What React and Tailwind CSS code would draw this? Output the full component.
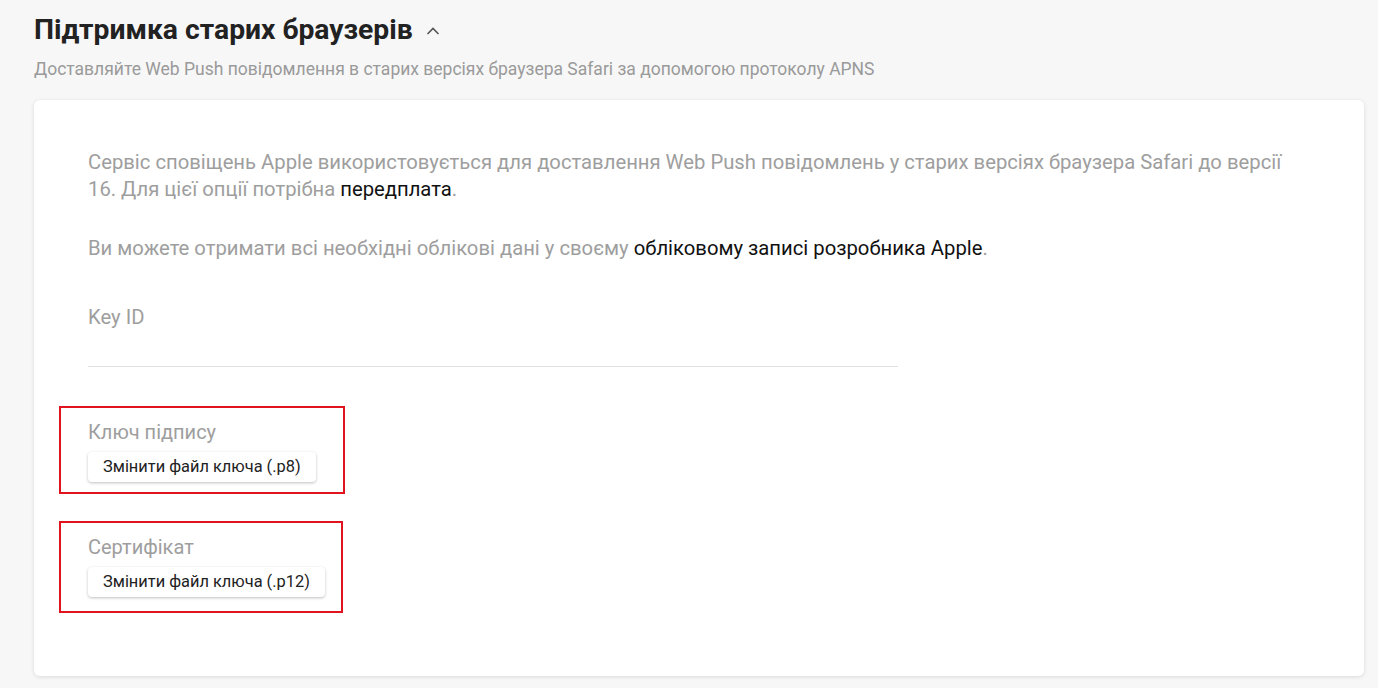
export default function App() {
    return (
        <div className="min-h-screen bg-[#f7f7f7] pl-[34px] pr-[14px] pt-[14px] pb-4" style={{ fontFamily: "Roboto, 'Noto Sans', sans-serif" }}>
            <div className="flex items-center gap-[13px]">
                <h1 className="text-[28.3px] leading-[32px] font-bold text-[#222]">Підтримка старих браузерів</h1>
                <svg width="14" height="10" viewBox="0 0 14 10" className="mt-[1px]">
                    <polyline points="1.5,8 7,2.5 12.5,8" fill="none" stroke="#555" strokeWidth="1.6" />
                </svg>
            </div>
            <p className="mt-[12px] text-[17.5px] leading-[22px] text-[#9a9a9a]">
                Доставляйте Web Push повідомлення в старих версіях браузера Safari за допомогою протоколу APNS
            </p>

            <div className="mt-[20px] bg-white rounded-[6px] shadow-[0_1px_4px_rgba(0,0,0,0.12)] pl-[25px] pr-[70px] pt-[49px] pb-[63px]">
                <div className="ml-[29px] text-[20.25px] leading-[27px] text-[#9e9e9e]">
                    <p>
                        Сервіс сповіщень Apple використовується для доставлення Web Push повідомлень у старих версіях браузера Safari до версії 16. Для цієї опції потрібна <span className="text-[#111]">передплата</span>.
                    </p>
                    <p className="mt-[32px]">
                        Ви можете отримати всі необхідні облікові дані у своєму <span className="text-[#111]">обліковому записі розробника Apple</span>.
                    </p>
                    <div className="mt-[42px] w-[810px] border-b border-[#e0e0e0] pb-[35px]">
                        <span>Key ID</span>
                    </div>
                </div>

                <div className="mt-[39px] w-[286px] border-2 border-[#e0141e] pl-[27px] pt-[11px] pb-[10px]">
                    <div className="text-[20px] leading-[27px] text-[#9e9e9e]">Ключ підпису</div>
                    <button className="mt-[6px] h-[30px] px-[15px] rounded-[4px] bg-white text-[16.4px] text-[#222] shadow-[0_1px_3px_rgba(0,0,0,0.25)]">
                        Змінити файл ключа (.p8)
                    </button>
                </div>

                <div className="mt-[27px] w-[284px] border-2 border-[#e0141e] pl-[27px] pt-[11px] pb-[14px]">
                    <div className="text-[20px] leading-[27px] text-[#9e9e9e]">Сертифікат</div>
                    <button className="mt-[6px] h-[30px] px-[15px] rounded-[4px] bg-white text-[16.4px] text-[#222] shadow-[0_1px_3px_rgba(0,0,0,0.25)]">
                        Змінити файл ключа (.p12)
                    </button>
                </div>
            </div>
        </div>
    );
}
